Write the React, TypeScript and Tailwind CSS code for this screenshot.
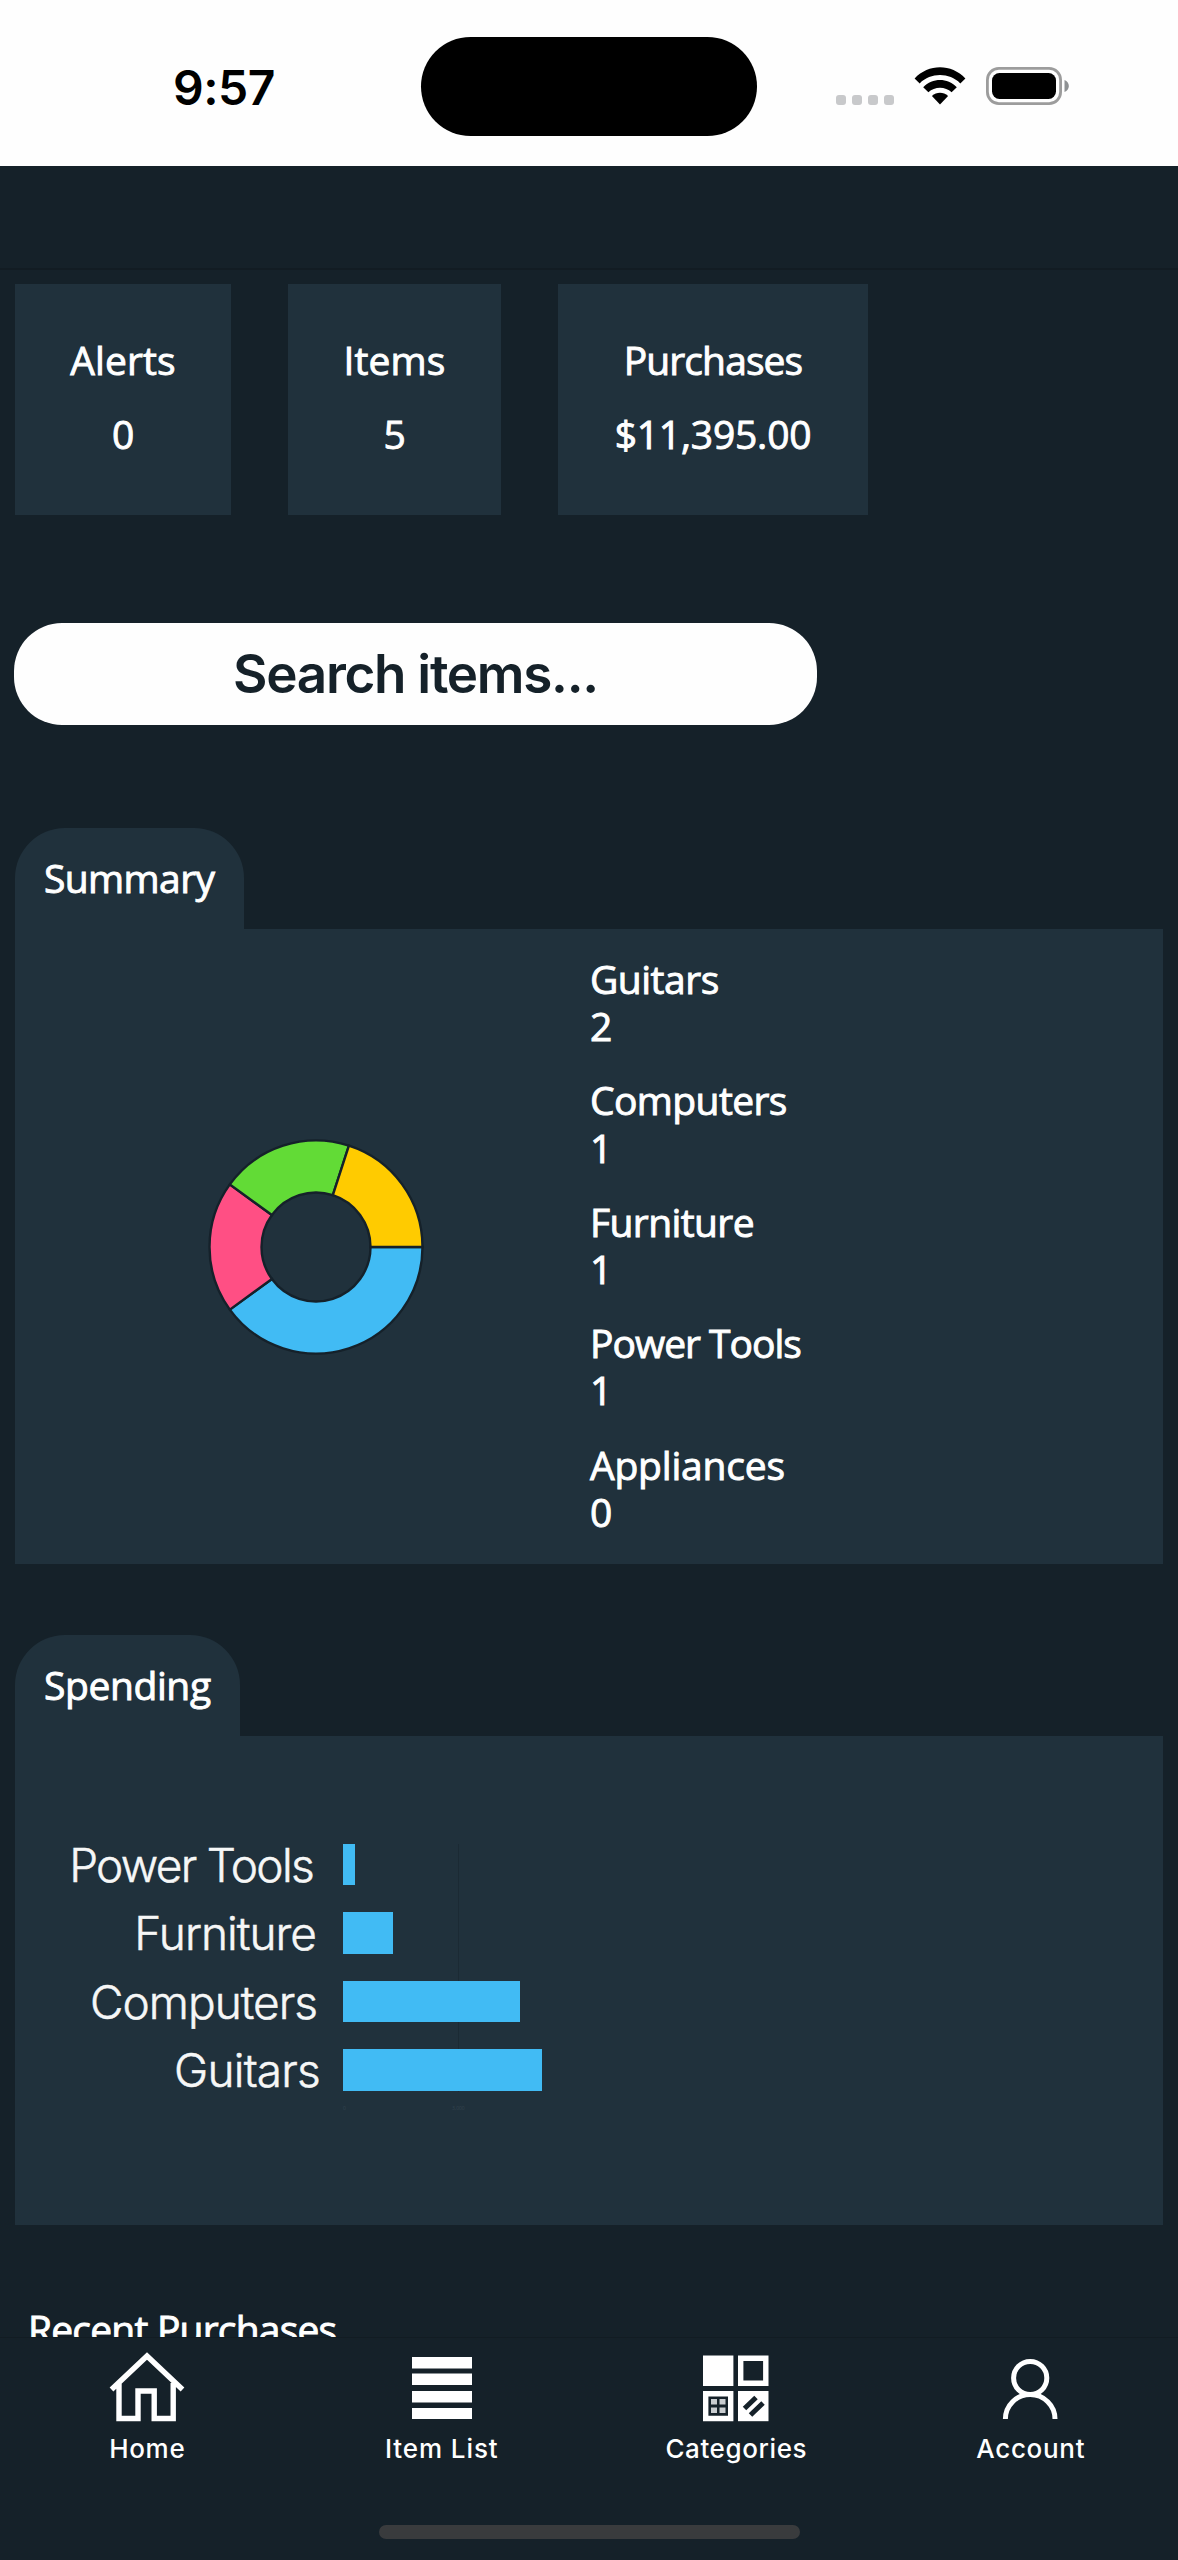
import { ReactNode } from 'react';

interface Category {
    name: string;
    count: number;
    tracking: string;
}

const categories: Category[] = [
    { name: 'Guitars', count: 2, tracking: 'tracking-[-0.5px]' },
    { name: 'Computers', count: 1, tracking: 'tracking-[-0.6px]' },
    { name: 'Furniture', count: 1, tracking: 'tracking-[-0.6px]' },
    { name: 'Power Tools', count: 1, tracking: 'tracking-[-1px]' },
    { name: 'Appliances', count: 0, tracking: 'tracking-[-0.2px]' },
];

const spending = [
    { name: 'Power Tools', width: 12, label: 'pr-[30px] tracking-[-1.7px]' },
    { name: 'Furniture', width: 50, label: 'pr-[27px] tracking-[-1px]' },
    { name: 'Computers', width: 177, label: 'pr-[26px] tracking-[-1px]' },
    { name: 'Guitars', width: 199, label: 'pr-[23px] tracking-[-0.8px]' },
];

const sliceColors = ['#41bbf4', '#ff4f84', '#62db36', '#ffcb00'];

/** Ring segment between two angles, in degrees clockwise from 3 o'clock. */
function ringPath(from: number, to: number, outer: number, inner: number) {
    const pt = (r: number, deg: number) => {
        const a = (deg * Math.PI) / 180;
        return `${(r * Math.cos(a)).toFixed(2)} ${(r * Math.sin(a)).toFixed(2)}`;
    };
    return `M${pt(outer, from)}A${outer} ${outer} 0 0 1 ${pt(outer, to)}L${pt(inner, to)}A${inner} ${inner} 0 0 0 ${pt(inner, from)}Z`;
}

function DonutChart() {
    const values = categories.filter(c => c.count > 0).map(c => c.count);
    const total = values.reduce((a, b) => a + b, 0);
    let start = 0;
    return (
        <svg width="216" height="216" viewBox="-108 -108 216 216">
            {values.map((v, i) => {
                const from = start;
                start += (v / total) * 360;
                return (
                    <path key={i} d={ringPath(from, start, 106.5, 54.5)} fill={sliceColors[i]} stroke="#15212a" strokeWidth="2.4" />
                );
            })}
        </svg>
    );
}

function StatusBar() {
    return (
        <div className="h-[166px] bg-[#fefefe] flex pt-[37px]">
            <div className="w-[421px] pl-[173px] pt-[21px] text-[48px] leading-[60px] font-semibold tracking-[-0.5px] text-black">9:57</div>
            <div className="w-[336px] h-[99px] rounded-full bg-black" />
            <div className="flex items-start pt-[30px] pl-[79px]">
                <div className="flex gap-[6px] mt-[28px]">
                    {[0, 1, 2, 3].map(i => (
                        <div key={i} className="size-[10px] rounded-[3px] bg-[#c8c9cb]" />
                    ))}
                </div>
                <svg className="ml-[20px]" width="52" height="38" viewBox="0 0 52 38">
                    <path d="M0.6 11.4C14.5 -3.6 37.5 -3.6 51.4 11.4L46.3 16.4C35.2 5.3 16.8 5.3 5.7 16.4Z" />
                    <path d="M9.2 20.2C18.6 10.6 33.4 10.6 42.8 20.2L37.6 25.3C31.4 19.2 20.6 19.2 14.4 25.3Z" />
                    <path d="M17.9 29C22.6 24.6 29.4 24.6 34.1 29L26 37.4Z" />
                </svg>
                <svg className="ml-[20px]" width="84" height="38" viewBox="0 0 84 38">
                    <rect x="1.4" y="1.4" width="73.2" height="35.2" rx="11.5" fill="none" stroke="#9c9c9c" strokeWidth="2.8" />
                    <rect x="6" y="6" width="64" height="26" rx="7.5" />
                    <path d="M78.5 13C84.3 15 84.3 23 78.5 25Z" fill="#8e9193" />
                </svg>
            </div>
        </div>
    );
}

function StatCard({ label, value, className }: { label: string; value: string; className: string }) {
    return (
        <div className={`h-[231px] bg-[#20313c] flex flex-col items-center pt-[39px] text-[39px] leading-[74px] [-webkit-text-stroke:0.9px_white] ${className}`}>
            <span>{label}</span>
            <span className="tracking-[-0.2px]">{value}</span>
        </div>
    );
}

function TabPanel({ title, tabClass, bodyClass, children }: { title: string; tabClass: string; bodyClass: string; children: ReactNode }) {
    return (
        <section className="mx-[15px]">
            <h2 className={`h-[101px] rounded-t-[50px] bg-[#20313c] pl-[29px] text-[39px] leading-[100px] [-webkit-text-stroke:0.9px_white] ${tabClass}`}>{title}</h2>
            <div className={`bg-[#20313c] ${bodyClass}`}>{children}</div>
        </section>
    );
}

function NavItem({ label, children, className }: { label: string; children: ReactNode; className: string }) {
    return (
        <div className="w-1/4 flex flex-col items-center">
            <svg width="80" height="76" viewBox="0 0 80 76" fill="none">{children}</svg>
            <span className={`mt-[10px] text-[26px] leading-[32px] font-medium whitespace-nowrap ${className}`}>{label}</span>
        </div>
    );
}

export default function App() {
    return (
        <div className="w-[1178px] h-[2560px] overflow-hidden flex flex-col bg-[#152129] text-white font-['Inter',sans-serif]">
            <StatusBar />
            <div className="h-[104px] shrink-0 border-b-2 border-[#121c23]" />

            {/* Scrolling content, cut off by the tab bar */}
            <main className="h-[2067px] shrink-0 overflow-hidden pt-[14px] font-['Open_Sans','Noto_Sans',sans-serif]">
                <div className="flex pl-[15px]">
                    <StatCard label="Alerts" value="0" className="w-[216px] tracking-[0.1px]" />
                    <StatCard label="Items" value="5" className="w-[213px] ml-[57px] tracking-[0.1px]" />
                    <StatCard label="Purchases" value="$11,395.00" className="w-[310px] ml-[57px] tracking-[-0.9px]" />
                </div>

                <div className="mt-[108px] ml-[14px] w-[803px] h-[102px] rounded-[48px] bg-[#fefefe] text-[#152129] text-center font-['Inter',sans-serif] text-[53px] leading-[102px] font-[560] tracking-[-1.3px]">
                    Search items...
                </div>

                <div className="mt-[103px]">
                    <TabPanel title="Summary" tabClass="w-[229px] tracking-[-0.6px]" bodyClass="h-[635px] flex">
                        <div className="w-[575px] flex items-center pl-[193px]">
                            <DonutChart />
                        </div>
                        <div className="pt-[26px] flex flex-col gap-[27px] [-webkit-text-stroke:0.9px_white]">
                            {categories.map(c => (
                                <div key={c.name} className="h-[94.4px] text-[39px] leading-[47.2px]">
                                    <div className={c.tracking}>{c.name}</div>
                                    <div>{c.count}</div>
                                </div>
                            ))}
                        </div>
                    </TabPanel>
                </div>

                <div className="mt-[71px]">
                    <TabPanel title="Spending" tabClass="w-[225px] tracking-[-0.4px]" bodyClass="h-[489px] pt-[108px]">
                        <div className="relative flex flex-col gap-[27px] font-['Inter',sans-serif]">
                            <div className="absolute left-[443px] top-0 w-px h-[248px] bg-[#1b2a34]" />
                            {spending.map(s => (
                                <div key={s.name} className="relative h-[41.4px] flex">
                                    <div className={`w-[328px] text-right text-[46px] leading-[43px] font-light whitespace-nowrap text-[#f6f7f7] [-webkit-text-stroke:0.5px_#f6f7f7] ${s.label}`}>{s.name}</div>
                                    <div className="h-full bg-[#41bbf4]" style={{ width: s.width }} />
                                </div>
                            ))}
                        </div>
                        {/* Axis ticks */}
                        <div className="flex mt-[14px] pl-[328px] text-[5px] leading-[7px] text-[#34444f]">
                            <span className="w-[109px]">0</span>
                            <span>3,000</span>
                        </div>
                    </TabPanel>
                </div>

                <h2 className="mt-[77px] ml-[28px] text-[39px] leading-[54px] tracking-[-0.8px] [-webkit-text-stroke:0.9px_white]">Recent Purchases</h2>
            </main>

            <nav className="flex-1 border-t border-[#121c23]">
                <div className="flex h-[150px] pt-[10px] -mt-px">
                    <NavItem label="Home" className="tracking-[0.7px]">
                        <path d="M4.5 42.5L40 9L75.5 42.5M12 36V71.5H31V44H47.2V71.5H66.2V36" stroke="white" strokeWidth="5.4" />
                    </NavItem>
                    <NavItem label="Item List" className="tracking-[0.9px]">
                        <path d="M10 10H70V21.5H10ZM10 26.5H70V38H10ZM10 44H70V55.5H10ZM10 61H70V72H10Z" fill="white" />
                    </NavItem>
                    <NavItem label="Categories" className="tracking-[0.6px]">
                        <path d="M7 8.5H37.4V39H7Z" fill="white" />
                        <path d="M44.7 11.2H69.8V36.3H44.7Z" stroke="white" strokeWidth="5.4" />
                        <path d="M9.7 46.7H34.7V71.5H9.7Z" stroke="white" strokeWidth="5.4" />
                        <path d="M15 52H21V57.5H15ZM23.5 52H29.5V57.5H23.5ZM15 60.5H21V66H15ZM23.5 60.5H29.5V66H23.5Z" fill="#c9cdd0" />
                        <path d="M42 44H72.5V74.2H42Z" fill="white" />
                        <path d="M48.5 61.5L60 50.5M54.5 68L67 56" stroke="#152129" strokeWidth="5" />
                    </NavItem>
                    <NavItem label="Account" className="tracking-[0.7px]">
                        <circle cx="39.2" cy="31" r="16.6" stroke="white" strokeWidth="5" />
                        <path d="M14.4 72A24.8 24.5 0 0 1 64 72" stroke="white" strokeWidth="5" />
                    </NavItem>
                </div>
                <div className="mt-[38px] mx-auto w-[421px] h-[14px] rounded-full bg-[#393b3d]" />
            </nav>
        </div>
    );
}
